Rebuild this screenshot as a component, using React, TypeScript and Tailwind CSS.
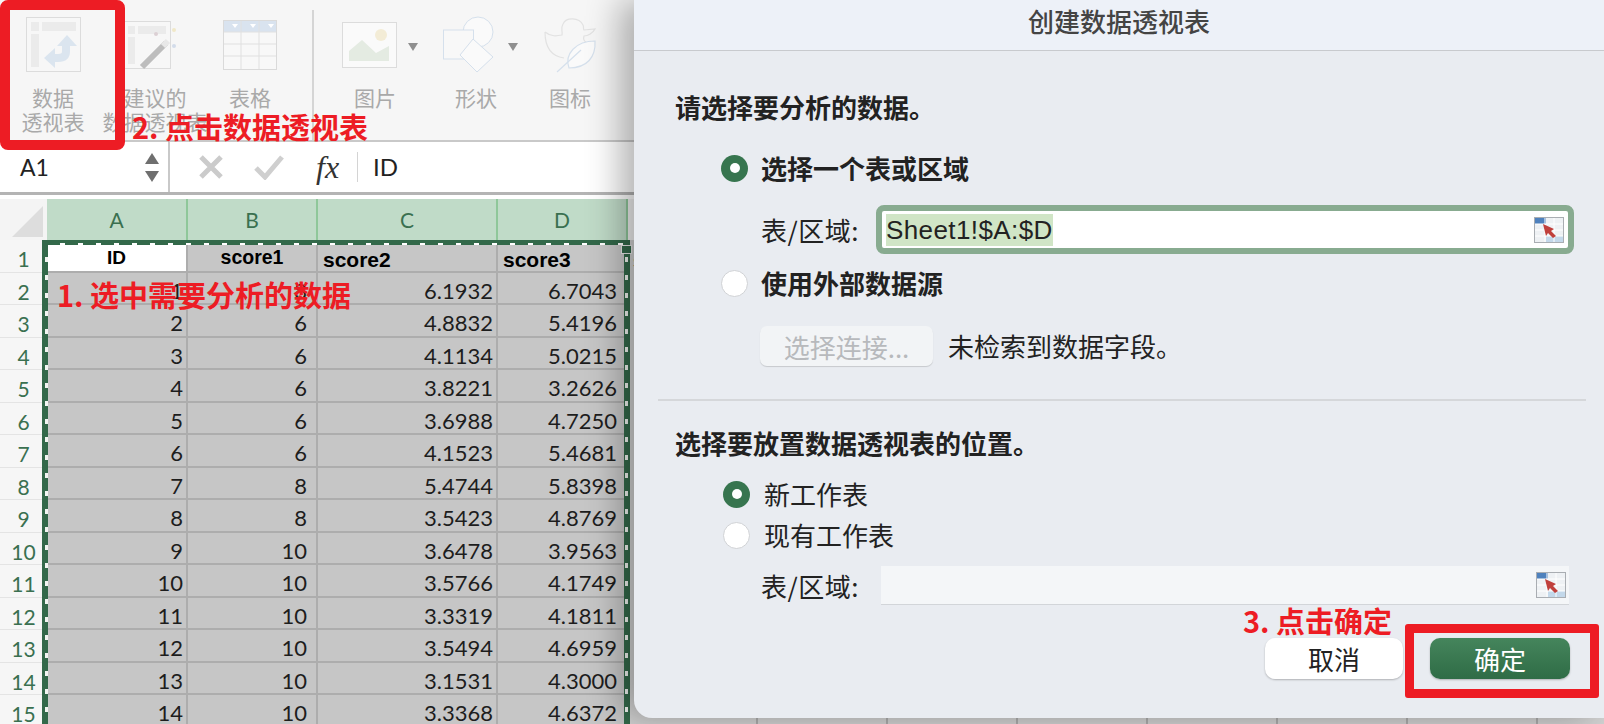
/**
 * @file App.tsx
 * @overview Excel for Mac: create pivot table dialog, with red tutorial marks.
 */

const cjk = "font-['Noto_Sans_CJK_SC','Noto_Sans',sans-serif]";
const cell = "font-['Lato','Liberation_Sans',sans-serif]";

const rows: [number, number, string, string][] = [
  [1, 8, '6.1932', '6.7043'],
  [2, 6, '4.8832', '5.4196'],
  [3, 6, '4.1134', '5.0215'],
  [4, 6, '3.8221', '3.2626'],
  [5, 6, '3.6988', '4.7250'],
  [6, 6, '4.1523', '5.4681'],
  [7, 8, '5.4744', '5.8398'],
  [8, 8, '3.5423', '4.8769'],
  [9, 10, '3.6478', '3.9563'],
  [10, 10, '3.5766', '4.1749'],
  [11, 10, '3.3319', '4.1811'],
  [12, 10, '3.5494', '4.6959'],
  [13, 10, '3.1531', '4.3000'],
  [14, 10, '3.3368', '4.6372'],
];

// right padding differs per column in the source sheet
const cellPad = ['pr-[3px]', 'pr-[9px]', 'pr-[3px]', 'pr-[9px]'];

function PivotIcon() {
  return (
    <svg width="55" height="55" viewBox="0 0 55 55" fill="none">
      <rect x="0.5" y="0.5" width="54" height="54" fill="#f7f7f7" stroke="#dcdcdc" />
      <rect x="5" y="5" width="8" height="9" fill="#ebebeb" />
      <rect x="16" y="5" width="34" height="9" fill="#ebebeb" />
      <rect x="5" y="17" width="8" height="33" fill="#ebebeb" />
      <path d="M40 27v7c0 5-3 7-8 7h-4" stroke="#dbe5ef" strokeWidth="8" />
      <path d="M31 29l10-11 10 11z" fill="#dbe5ef" />
      <path d="M29 31v20L18 41z" fill="#dbe5ef" />
    </svg>
  );
}

function SuggestIcon() {
  return (
    <svg width="64" height="56" viewBox="0 0 64 56" fill="none">
      <rect x="0.5" y="4.5" width="47" height="47" fill="#f7f7f7" stroke="#dcdcdc" />
      <rect x="5" y="9" width="7" height="8" fill="#ebebeb" />
      <rect x="15" y="9" width="28" height="8" fill="#ebebeb" />
      <rect x="5" y="20" width="7" height="27" fill="#ebebeb" />
      <path d="M19 50l24-24" stroke="#bdbdbd" strokeWidth="6" />
      <path d="M40 29l5-5" stroke="#e8e8e8" strokeWidth="6" />
      <circle cx="33" cy="17" r="2" fill="#dcd0d4" />
      <circle cx="51" cy="13" r="2" fill="#f0e8c8" />
      <circle cx="51" cy="29" r="2" fill="#d3dcea" />
    </svg>
  );
}

function TableIcon() {
  return (
    <svg width="54" height="50" viewBox="0 0 54 50" fill="none">
      <rect x="0.5" y="0.5" width="53" height="49" fill="#f8f8f8" stroke="#dadada" />
      <rect x="1" y="1" width="52" height="11" fill="#d9e3ef" />
      <path d="M18 1v48M36 1v48M1 12h52M1 24h52M1 36h52" stroke="#e0e0e0" />
      <path d="M9 4h6l-3 4zM27 4h6l-3 4zM45 4h6l-3 4z" fill="#ffffff" />
    </svg>
  );
}

function PictureIcon() {
  return (
    <svg width="55" height="46" viewBox="0 0 55 46" fill="none">
      <rect x="0.5" y="0.5" width="54" height="45" fill="#fafafa" stroke="#dcdcdc" />
      <circle cx="39" cy="13" r="6" fill="#f3ecd6" />
      <path d="M7 39V29l13-11 14 13 13-7 0 15z" fill="#e4ebe2" />
    </svg>
  );
}

function ShapesIcon() {
  return (
    <svg width="54" height="57" viewBox="0 0 54 57" fill="none" stroke="#d5e0ec">
      <circle cx="35" cy="16" r="15" fill="#fafafa" />
      <rect x="0.5" y="14" width="30" height="29" fill="#f8f8f8" />
      <path d="M30 23l20 18-16 15-17-17z" fill="#fafafa" />
    </svg>
  );
}

function DuckIcon() {
  return (
    <svg width="54" height="56" viewBox="0 0 54 56" fill="none">
      <path d="M2 15c6 5 12 4 17 3 1-4-2-6 1-11 3-7 16-7 20 1 1 2 0 4 1 5l11-1c-2 4-7 7-11 7-1 3 0 5 2 6M2 15c0 13 5 24 19 26" stroke="#e2e2e2" strokeWidth="1.2" />
      <path d="M52 24c1 16-8 27-26 27-5-14 7-27 26-27z" fill="#fafafa" stroke="#d5e0ec" strokeWidth="1.2" />
      <path d="M14 55l24-22" stroke="#d5e0ec" strokeWidth="1.2" />
    </svg>
  );
}

function DropArrow() {
  return <div className="h-0 w-0 border-x-[5px] border-t-[8px] border-x-transparent border-t-[#8f8f8f]" />;
}

function RibbonItem({ width, icon, arrow, lines }: { width: string; icon: JSX.Element; arrow?: boolean; lines: string[] }) {
  return (
    <div className={`${width} flex shrink-0 flex-col items-center`}>
      <div className={`relative flex h-[81px] items-center ${arrow ? 'pr-[12px]' : ''}`}>
        {icon}
        {arrow && (
          <div className="absolute -right-[9px] top-[39px]">
            <DropArrow />
          </div>
        )}
      </div>
      <div className={`${cjk} whitespace-nowrap text-center text-[21px] leading-[24px] text-[#a9a9a9]`}>
        {lines.map((l) => (
          <div key={l}>{l}</div>
        ))}
      </div>
    </div>
  );
}

function Ribbon() {
  return (
    <div className="flex h-[142px] overflow-hidden border-b-2 border-[#c9c9c9] bg-[#f6f6f6] pt-[4px]">
      <RibbonItem width="w-[106px]" icon={<PivotIcon />} lines={['数据', '透视表']} />
      <RibbonItem width="w-[98px]" icon={<SuggestIcon />} lines={['建议的', '数据透视表']} />
      <RibbonItem width="w-[92px]" icon={<TableIcon />} lines={['表格']} />
      <div className="ml-[16px] mt-[6px] h-[132px] w-[2px] bg-[#d5d5d5]" />
      <RibbonItem width="w-[122px]" icon={<PictureIcon />} arrow lines={['图片']} />
      <RibbonItem width="w-[80px]" icon={<ShapesIcon />} arrow lines={['形状']} />
      <RibbonItem width="w-[108px]" icon={<DuckIcon />} lines={['图标']} />
    </div>
  );
}

function FormulaBar() {
  return (
    <div className="flex h-[53px] border-b-[3px] border-[#b4b4b4] bg-white">
      <div className={`${cell} flex w-[170px] items-center justify-between border-r-2 border-[#c9c9c9] pl-[20px] pr-[9px] text-[23px] text-[#222]`}>
        <span>A1</span>
        <div className="flex flex-col gap-[7px]">
          <div className="h-0 w-0 border-x-[7px] border-b-[11px] border-x-transparent border-b-[#6f6f6f]" />
          <div className="h-0 w-0 border-x-[7px] border-t-[11px] border-x-transparent border-t-[#6f6f6f]" />
        </div>
      </div>
      <div className="flex flex-1 items-center pl-[28px]">
        <svg width="26" height="26" viewBox="0 0 26 26">
          <path d="M3 3l20 20M23 3L3 23" stroke="#cbcbcb" strokeWidth="5" />
        </svg>
        <svg className="ml-[30px]" width="30" height="26" viewBox="0 0 30 26" fill="none">
          <path d="M2 14l9 9L28 3" stroke="#cfcfcf" strokeWidth="5" />
        </svg>
        <span className="ml-[32px] w-[34px] font-['Liberation_Serif',serif] text-[32px] italic leading-none text-[#333]">fx</span>
        <div className="ml-[7px] h-[30px] w-px bg-[#d4d4d4]" />
        <span className={`${cell} ml-[15px] text-[24px] text-[#222]`}>ID</span>
      </div>
    </div>
  );
}

function Sheet() {
  const grid = 'grid grid-cols-[47px_141px_130px_180px_130px_1fr]';
  const td = `${cell} flex h-[32.5px] items-center justify-end overflow-hidden border-b-2 border-r-2 border-[#adadad] bg-[#c6c6c6] pt-[6px] text-[22px] leading-none text-[#1d1d1d]`;
  const head = "flex h-[32.5px] items-center overflow-hidden border-b-2 border-r-2 border-[#adadad] bg-[#c6c6c6] font-['Liberation_Sans',sans-serif] font-bold leading-none text-black";
  const rowNo = `${cell} flex h-[32.5px] items-center justify-center border-b border-[#e4e4e4] bg-[#f6f6f6] pt-[6px] text-[21px] leading-none text-[#3a7050]`;
  const beyond = 'h-[32.5px] bg-[repeating-linear-gradient(to_right,#d2d2d2_0_128px,#adadad_128px_130px)]';
  return (
    <div className="relative flex-1 overflow-hidden bg-white pt-[4px]">
      <div className={`${grid} h-[41px]`}>
        <div className="relative bg-[#f4f4f4]">
          <div className="absolute bottom-[3px] right-[4px] h-0 w-0 border-b-[31px] border-l-[31px] border-b-[#dddddd] border-l-transparent" />
        </div>
        {['A', 'B', 'C', 'D'].map((c) => (
          <div key={c} className={`${cell} flex items-center justify-center border-r-2 border-[#8fc79a] bg-[#c0dbc8] text-[21px] text-[#3a7050]`}>
            {c}
          </div>
        ))}
        <div className="bg-[#f2f2f2]" />
      </div>
      <div className={grid}>
        <div className={rowNo}>1</div>
        <div className={`${head} justify-center !bg-white pt-[4px] text-[19px]`}>ID</div>
        <div className={`${head} justify-center pt-[4px] text-[19.5px]`}>score1</div>
        <div className={`${head} pl-[5px] pt-[8px] text-[21px]`}>score2</div>
        <div className={`${head} pl-[5px] pt-[8px] text-[21px]`}>score3</div>
        <div className={`${beyond} flex items-center overflow-hidden pl-[5px] pt-[8px] font-['Liberation_Sans',sans-serif] text-[21px] font-bold leading-none text-black`}>score4</div>
        {rows.map((r, i) => (
          <Row key={r[0]} no={i + 2} data={r} td={td} rowNo={rowNo} beyond={beyond} />
        ))}
      </div>
      {/* marching ants round the copied range */}
      <div className="absolute left-[42px] top-[45px] h-[500px] w-[588px] border-x-[6px] border-t-[5px] border-[#33694a]">
        <div className="absolute -left-[3px] top-0 h-full w-[3px] bg-[repeating-linear-gradient(to_bottom,transparent_0_12px,#f2f5f2_12px_17px,transparent_17px_18px)]" />
        <div className="absolute -right-[4px] top-0 h-full w-[3px] bg-[repeating-linear-gradient(to_bottom,transparent_0_12px,#f2f5f2_12px_17px,transparent_17px_18px)]" />
        <div className="absolute -top-[2px] left-0 h-[2px] w-full bg-[repeating-linear-gradient(to_right,transparent_0_12px,#ffffff_12px_17px,transparent_17px_18px)]" />
        <div className="absolute -right-[8px] top-0 h-[9px] w-[11px] border border-[#e8e8e8] bg-[#33694a]" />
      </div>
    </div>
  );
}

function Row({ no, data, td, rowNo, beyond }: { no: number; data: [number, number, string, string]; td: string; rowNo: string; beyond: string }) {
  return (
    <>
      <div className={rowNo}>{no}</div>
      {data.map((v, i) => (
        <div key={i} className={`${td} ${cellPad[i]}`}>
          {v}
        </div>
      ))}
      <div className={beyond} />
    </>
  );
}

function Radio({ checked }: { checked?: boolean }) {
  return checked ? (
    <div className="flex h-[27px] w-[27px] shrink-0 items-center justify-center rounded-full bg-[#37754f]">
      <div className="h-[10px] w-[10px] rounded-full bg-white" />
    </div>
  ) : (
    <div className="h-[27px] w-[27px] shrink-0 rounded-full border border-[#d0d2d5] bg-white" />
  );
}

function RangeGlyph() {
  return (
    <svg width="30" height="26" viewBox="0 0 30 26">
      <rect x="0.5" y="0.5" width="29" height="25" fill="#eef1f4" stroke="#a9adb2" />
      <rect x="1" y="1" width="11" height="6" fill="#4f81bd" />
      <rect x="12" y="19" width="17" height="6" fill="#c3d8ea" />
      <path d="M1 7h28M1 13h28M1 19h28M11 1v24M20 1v24" stroke="#fff" />
      <path d="M9 7l11 5-3 2 5 5-3 2-5-5-2 3z" fill="#c0403c" />
    </svg>
  );
}

function Dialog() {
  const label = `${cjk} text-[26px] leading-[32px] text-[#222]`;
  const strong = `${cjk} text-[26px] font-bold leading-[32px] text-[#222]`;
  return (
    <div className="absolute bottom-[6px] left-[634px] right-0 top-0 overflow-hidden rounded-bl-[18px] bg-[#e9ecf1] shadow-[-14px_0_34px_rgba(0,0,0,0.3)]">
      <div className={`${cjk} flex h-[51px] items-center justify-center border-b border-[#c8cace] bg-[#edf1f8] pb-[10px] text-[26px] font-medium text-[#444]`}>
        创建数据透视表
      </div>
      <div className="flex flex-col pl-[41px] pr-[18px] pt-[40px]">
        <div className={strong}>请选择要分析的数据。</div>
        <div className="ml-[46px] mt-[29px] flex h-[32px] items-center gap-[13px]">
          <Radio checked />
          <span className={strong}>选择一个表或区域</span>
        </div>
        <div className="ml-[86px] mt-[21px] flex items-center">
          <span className={`${label} w-[115px] shrink-0 whitespace-nowrap tracking-[0.5px]`}>表/区域:</span>
          <div className="flex h-[49px] w-[698px] items-center justify-between rounded-[8px] border-[6px] border-[#88ab90] bg-white pr-[4px]">
            <span className="ml-[4px] bg-[#d0e5c6] font-['Liberation_Sans',sans-serif] text-[26px] leading-[32px] tracking-[0.4px] text-[#222]">Sheet1!$A:$D</span>
            <RangeGlyph />
          </div>
        </div>
        <div className="ml-[46px] mt-[13px] flex h-[32px] items-center gap-[13px]">
          <Radio />
          <span className={strong}>使用外部数据源</span>
        </div>
        <div className="ml-[85px] mt-[27px] flex items-center gap-[15px]">
          <div className={`${cjk} flex h-[40px] w-[173px] items-center justify-center rounded-[7px] bg-[#f2f4f6] text-[26px] text-[#b7b9bc] shadow-[0_1px_1px_rgba(0,0,0,0.15)]`}>
            选择连接...
          </div>
          <span className={label}>未检索到数据字段。</span>
        </div>
        <div className="-ml-[17px] mt-[33px] h-[2px] bg-[#d5d7da]" />
        <div className={`${strong} mt-[26px]`}>选择要放置数据透视表的位置。</div>
        <div className="ml-[48px] mt-[20px] flex h-[30px] items-center gap-[14px]">
          <Radio checked />
          <span className={label}>新工作表</span>
        </div>
        <div className="ml-[48px] mt-[11px] flex h-[30px] items-center gap-[14px]">
          <Radio />
          <span className={label}>现有工作表</span>
        </div>
        <div className="ml-[86px] mt-[16px] flex items-center">
          <span className={`${label} w-[120px] shrink-0 whitespace-nowrap tracking-[0.5px]`}>表/区域:</span>
          <div className="flex h-[39px] w-[688px] items-center justify-end border-b border-[#d2d5d9] bg-[#f4f6f8] pr-[3px]">
            <RangeGlyph />
          </div>
        </div>
        <div className="mr-[16px] mt-[33px] flex justify-end gap-[27px]">
          <div className={`${cjk} flex h-[41px] w-[138px] items-center justify-center rounded-[10px] bg-white text-[26px] text-[#222] shadow-[0_1px_2px_rgba(0,0,0,0.25)]`}>
            取消
          </div>
          <div className={`${cjk} flex h-[41px] w-[140px] items-center justify-center rounded-[10px] bg-gradient-to-b from-[#45855c] to-[#2f6c46] text-[26px] text-white shadow-[0_1px_2px_rgba(0,0,0,0.25)]`}>
            确定
          </div>
        </div>
      </div>
    </div>
  );
}

export default function App() {
  const mark = `${cjk} absolute whitespace-nowrap font-bold leading-none text-[#ed1c24]`;
  return (
    <div className="relative flex h-[724px] w-[1604px] flex-col overflow-hidden bg-white">
      <Ribbon />
      <FormulaBar />
      <Sheet />
      <Dialog />
      {/* tutorial marks painted over the screenshot */}
      <div className="absolute left-0 top-0 h-[150px] w-[125px] rounded-[8px] border-[10px] border-[#ed1c24]" />
      <div className="absolute left-[1405px] top-[624px] h-[74px] w-[194px] rounded-[3px] border-[9px] border-[#ed1c24]" />
      <div className={`${mark} left-[132px] top-[112px] text-[29px]`}>2. 点击数据透视表</div>
      <div className={`${mark} left-[57px] top-[280px] text-[29px]`}>1. 选中需要分析的数据</div>
      <div className={`${mark} left-[1243px] top-[606px] text-[29px]`}>3. 点击确定</div>
    </div>
  );
}
